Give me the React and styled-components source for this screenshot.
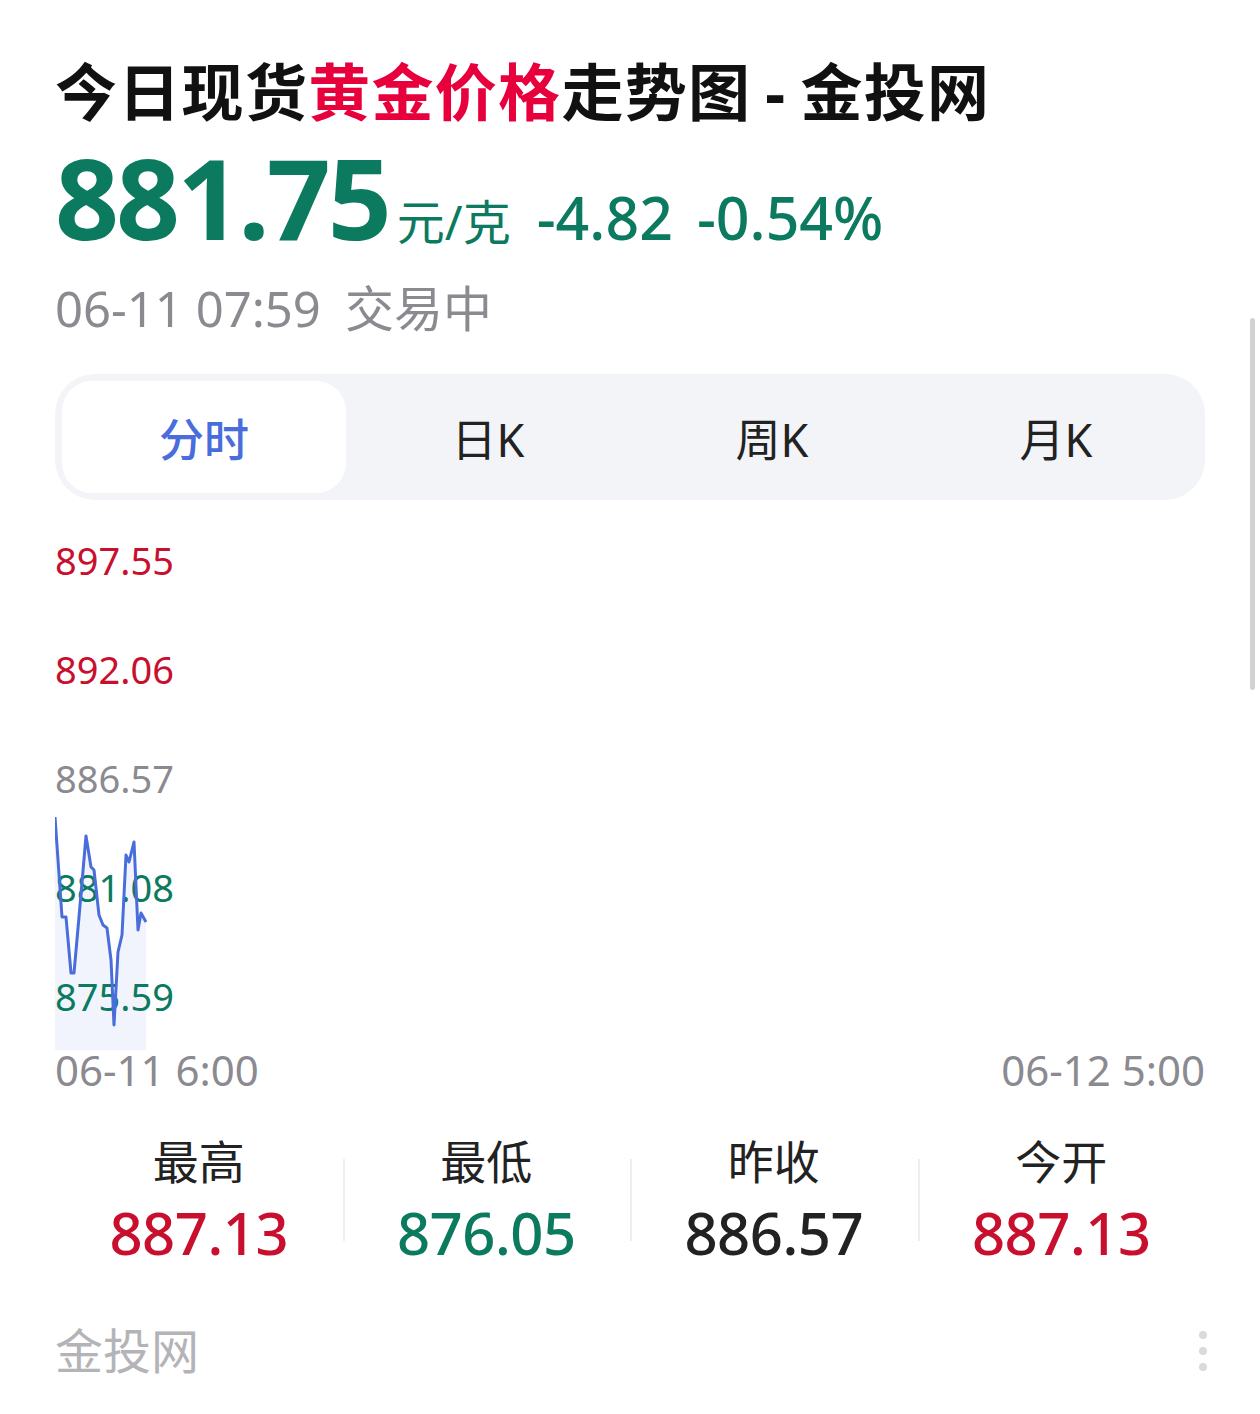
import React from 'react'
import styled, { createGlobalStyle } from 'styled-components'

const GlobalStyle = createGlobalStyle`
  html, body {
    margin: 0;
    padding: 0;
    background: #ffffff;
  }
  body {
    font-family: "Noto Sans", "Noto Sans CJK SC", sans-serif;
  }
`

const Page = styled.div`
  position: relative;
  width: 1260px;
  min-height: 1414px;
  box-sizing: border-box;
  padding: 52px 55px 0 55px;
  background: #fff;
  overflow: hidden;
`

const Title = styled.h1`
  margin: 0;
  font-size: 62px;
  line-height: 80px;
  font-weight: 700;
  letter-spacing: 1.3px;
  color: #111;
  white-space: nowrap;
  span {
    color: #e8003d;
  }
  i {
    font-style: normal;
    margin: 0 14px;
  }
`

const PriceRow = styled.div`
  display: flex;
  align-items: baseline;
  height: 130px;
  color: #0b7a5f;
`

const BigPrice = styled.span`
  font-size: 112px;
  line-height: 130px;
  font-weight: 700;
  letter-spacing: -3px;
`

const Unit = styled.span`
  font-size: 48px;
  margin-left: 8px;
  margin-right: 26px;
`

const Change = styled.span`
  font-size: 59px;
  font-weight: 500;
  margin-right: 24px;
`

const DateLine = styled.div`
  margin-top: 16px;
  font-size: 49px;
  line-height: 60px;
  color: #8a8a90;
  display: flex;
  gap: 24px;
`

const Tabs = styled.div`
  margin-top: 36px;
  height: 126px;
  box-sizing: border-box;
  padding: 7px;
  border-radius: 40px;
  background: #f3f4f8;
  display: grid;
  grid-template-columns: repeat(4, 1fr);
`

const Tab = styled.div`
  display: flex;
  align-items: center;
  justify-content: center;
  border-radius: 30px;
  font-size: 45px;
  background: ${p => (p.$active ? '#fff' : 'transparent')};
  color: ${p => (p.$active ? '#4a6ddc' : '#222')};
  font-weight: ${p => (p.$active ? 500 : 400)};
`

const Chart = styled.div`
  position: relative;
  margin-top: 5px;
  height: 545px;
  display: flex;
  flex-direction: column;
`

const AxisLabel = styled.div`
  position: relative;
  z-index: 1;
  height: 109px;
  display: flex;
  align-items: center;
  font-size: 38px;
  color: ${p => p.$color};
`

const ChartLayer = styled.svg`
  position: absolute;
  left: 0;
  top: 0;
  width: 100%;
  height: 100%;
  z-index: ${p => p.$z};
  pointer-events: none;
`

const XAxis = styled.div`
  display: flex;
  justify-content: space-between;
  font-size: 42px;
  line-height: 40px;
  color: #8a8a90;
`

const Stats = styled.div`
  margin-top: 41px;
  display: grid;
  grid-template-columns: repeat(4, 1fr);
`

const StatCell = styled.div`
  position: relative;
  display: flex;
  flex-direction: column;
  align-items: center;
  &:not(:first-child)::before {
    content: '';
    position: absolute;
    left: 0;
    top: 28px;
    bottom: 27px;
    width: 2px;
    background: #eeeef0;
  }
`

const StatLabel = styled.div`
  font-size: 46px;
  line-height: 60px;
  color: #222;
`

const StatValue = styled.div`
  margin-top: 7px;
  font-size: 58px;
  line-height: 70px;
  font-weight: 500;
  letter-spacing: -0.5px;
  color: ${p => p.$color};
`

const Footer = styled.div`
  margin-top: 53px;
  display: flex;
  align-items: center;
  justify-content: space-between;
  height: 60px;
`

const Brand = styled.div`
  font-size: 48px;
  line-height: 60px;
  color: #b4b4b8;
`

const Dots = styled.div`
  display: flex;
  flex-direction: column;
  gap: 8px;
  margin-right: -2px;
  span {
    width: 8px;
    height: 8px;
    border-radius: 50%;
    background: #dadadd;
  }
`

const Scrollbar = styled.div`
  position: absolute;
  left: 1250px;
  top: 318px;
  width: 5px;
  height: 372px;
  border-radius: 3px;
  background: #d2d2d4;
`

const RED = '#c8102e'
const GREEN = '#0b7a5f'
const GRAY = '#8a8a90'
const DARK = '#222'

const axis = [
  { v: '897.55', c: RED },
  { v: '892.06', c: RED },
  { v: '886.57', c: GRAY },
  { v: '881.08', c: GREEN },
  { v: '875.59', c: GREEN },
]

// line points in page coords, shifted to chart origin (55, 505)
const raw = [
  [55, 817], [62, 917], [66, 917], [71, 973], [74, 973], [79, 917],
  [86, 836], [91, 867], [94, 870], [99, 915], [103, 925], [107, 928],
  [111, 960], [114, 1025], [118, 952], [122, 935], [126, 855], [129, 862],
  [134, 842], [138, 930], [141, 913], [146, 922],
]
const pts = raw.map(([x, y]) => [x - 55, y - 505])
const linePath = pts.map(([x, y], i) => `${i ? 'L' : 'M'}${x} ${y}`).join(' ')
const areaPath = `${linePath} L${pts[pts.length - 1][0]} 545 L0 545 Z`

const stats = [
  { label: '最高', value: '887.13', color: RED },
  { label: '最低', value: '876.05', color: GREEN },
  { label: '昨收', value: '886.57', color: DARK },
  { label: '今开', value: '887.13', color: RED },
]

const App = () => {
  return (
    <Page>
      <GlobalStyle />
      <Title>
        今日现货<span>黄金价格</span>走势图<i>-</i>金投网
      </Title>
      <PriceRow>
        <BigPrice>881.75</BigPrice>
        <Unit>元/克</Unit>
        <Change>-4.82</Change>
        <Change>-0.54%</Change>
      </PriceRow>
      <DateLine>
        <span>06-11 07:59</span>
        <span>交易中</span>
      </DateLine>
      <Tabs>
        <Tab $active>分时</Tab>
        <Tab>日K</Tab>
        <Tab>周K</Tab>
        <Tab>月K</Tab>
      </Tabs>
      <Chart>
        <ChartLayer $z={0} viewBox="0 0 1150 545" preserveAspectRatio="none">
          <path d={areaPath} fill="#f1f4fc" />
        </ChartLayer>
        <ChartLayer $z={2} viewBox="0 0 1150 545" preserveAspectRatio="none">
          <path d={linePath} fill="none" stroke="#4a6ddc" strokeWidth="3" strokeLinejoin="round" />
        </ChartLayer>
        {axis.map(a => (
          <AxisLabel key={a.v} $color={a.c}>{a.v}</AxisLabel>
        ))}
      </Chart>
      <XAxis>
        <span>06-11 6:00</span>
        <span>06-12 5:00</span>
      </XAxis>
      <Stats>
        {stats.map(s => (
          <StatCell key={s.label}>
            <StatLabel>{s.label}</StatLabel>
            <StatValue $color={s.color}>{s.value}</StatValue>
          </StatCell>
        ))}
      </Stats>
      <Footer>
        <Brand>金投网</Brand>
        <Dots>
          <span />
          <span />
          <span />
        </Dots>
      </Footer>
      <Scrollbar />
    </Page>
  )
}

export default App
